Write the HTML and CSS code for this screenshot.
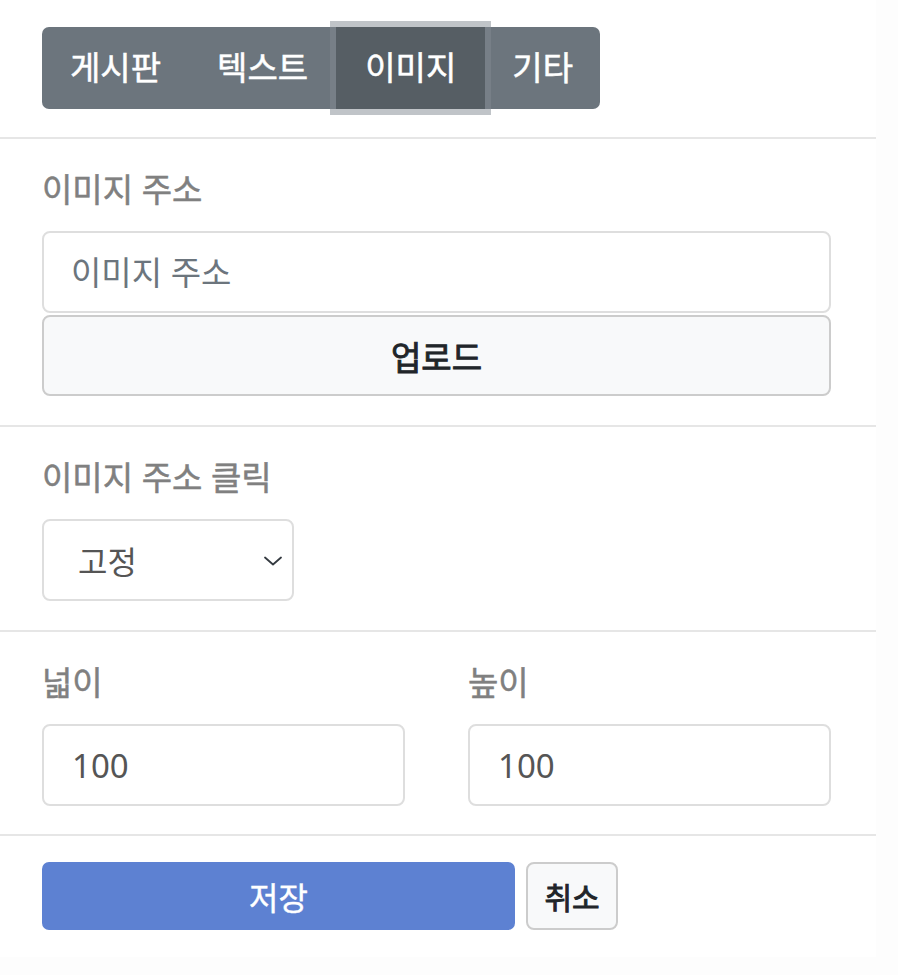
FILE: index.html
```html
<!DOCTYPE html>
<html lang="ko">
<head>
<meta charset="utf-8">
<title>이미지 설정</title>
<link rel="stylesheet" href="styles.css">
</head>
<body>
<div class="panel">
  <div class="tabs-area">
    <div class="tab-group">
      <button class="tab">게시판</button>
      <button class="tab">텍스트</button>
      <button class="tab active">이미지</button>
      <button class="tab">기타</button>
    </div>
  </div>

  <section class="section">
    <label class="label">이미지 주소</label>
    <input class="field" type="text" placeholder="이미지 주소">
    <button class="btn-light upload">업로드</button>
  </section>

  <section class="section">
    <label class="label">이미지 주소 클릭</label>
    <div class="select">
      <span class="select-value">고정</span>
      <svg class="chevron" width="18" height="10" viewBox="0 0 18 10"><path d="M1 1.5 L9 8.5 L17 1.5" fill="none" stroke="#343a40" stroke-width="1.8" stroke-linecap="round" stroke-linejoin="round"/></svg>
    </div>
  </section>

  <section class="section size">
    <div class="two-col">
      <div class="col">
        <label class="label">넓이</label>
        <input class="field value" type="text" value="100">
      </div>
      <div class="col">
        <label class="label">높이</label>
        <input class="field value" type="text" value="100">
      </div>
    </div>
  </section>

  <section class="section actions">
    <button class="btn-primary">저장</button>
    <button class="btn-light cancel">취소</button>
  </section>
</div>
</body>
</html>
```

FILE: styles.css
```css
* { box-sizing: border-box; }

html, body {
  margin: 0;
  padding: 0;
  background: #fdfdfd;
  font-family: "Noto Sans", "Noto Sans CJK KR", sans-serif;
}

.panel {
  width: 876px;
  height: 957px;
  background: #ffffff;
  display: flex;
  flex-direction: column;
}

.tabs-area {
  padding: 27px 0 28px 42px;
}

.tab-group {
  display: inline-flex;
  background: #6c757d;
  border-radius: 7px;
  height: 82px;
}

.tab {
  font-family: inherit;
  font-size: 33px;
  font-weight: 400;
  -webkit-text-stroke: 0.5px #ffffff;
  color: #ffffff;
  background: transparent;
  border: 0;
  padding: 0 28px;
  height: 82px;
  line-height: 82px;
  cursor: pointer;
}

.tab:first-child { border-radius: 7px 0 0 7px; }
.tab:last-child { border-radius: 0 7px 7px 0; padding: 0 27px; }

.tab.active {
  background: #565e64;
  box-shadow: 0 0 0 6px rgba(130, 138, 145, 0.5);
  position: relative;
  z-index: 1;
  padding: 0 29px;
}

.section {
  border-top: 2px solid #e6e6e6;
  padding: 28px 45px 29px 42px;
  display: flex;
  flex-direction: column;
  align-items: flex-start;
}

.label {
  display: block;
  font-size: 33px;
  font-weight: 400;
  -webkit-text-stroke: 0.5px #808080;
  line-height: 45px;
  color: #808080;
  margin-bottom: 19px;
}

.field {
  width: 100%;
  height: 82px;
  border: 2px solid #dedede;
  border-radius: 8px;
  padding: 0 27px;
  font-family: inherit;
  font-size: 33px;
  color: #555555;
  background: #ffffff;
  outline: none;
}

.field::placeholder { color: #6c757d; }

.field.value { padding-left: 28px; }

.btn-light {
  font-family: inherit;
  font-weight: 400;
  -webkit-text-stroke: 0.9px #212529;
  color: #212529;
  background: #f8f9fa;
  border: 2px solid #cccccc;
  border-radius: 8px;
  cursor: pointer;
}

.upload {
  width: 100%;
  height: 81px;
  margin-top: 2px;
  font-size: 33px;
}

.select {
  width: 252px;
  height: 82px;
  border: 2px solid #dedede;
  border-radius: 8px;
  display: flex;
  align-items: center;
  justify-content: space-between;
  padding: 0 10px 0 34px;
}

.select-value {
  font-size: 32px;
  color: #555555;
}

.chevron { display: block; margin-top: 2px; }

.two-col {
  width: 100%;
  display: grid;
  grid-template-columns: 1fr 1fr;
  column-gap: 63px;
}

.size { padding-bottom: 28px; }

.actions {
  flex-direction: row;
  align-items: stretch;
  gap: 11px;
  padding-top: 26px;
  padding-bottom: 27px;
}

.btn-primary {
  width: 473px;
  height: 68px;
  font-family: inherit;
  font-size: 32px;
  font-weight: 400;
  -webkit-text-stroke: 0.4px #ffffff;
  color: #ffffff;
  background: #5d81d2;
  border: 0;
  border-radius: 7px;
  cursor: pointer;
}

.cancel {
  width: 92px;
  height: 68px;
  font-size: 30px;
  padding: 0;
}
```
